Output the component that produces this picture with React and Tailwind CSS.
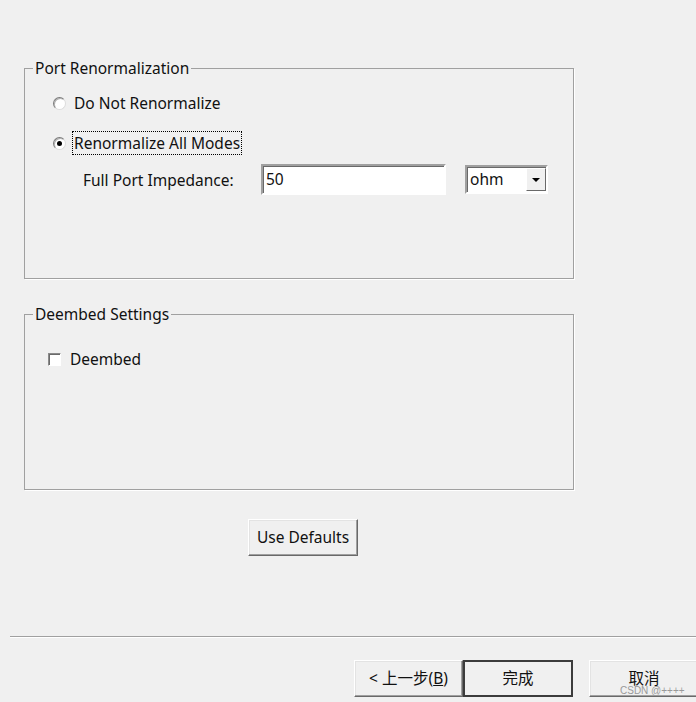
import React from "react";

const font = "font-['Noto_Sans','Noto_Sans_CJK_SC',sans-serif]";

function Radio({ checked }) {
  return (
    <span className="relative flex h-[13px] w-[13px] shrink-0 items-center justify-center rounded-full border border-t-[#7a7a7a] border-l-[#7a7a7a] border-r-[#dcdcdc] border-b-[#dcdcdc] bg-white shadow-[inset_1px_1px_0_#b0b0b0]">
      {checked && <span className="h-[5px] w-[5px] rounded-full bg-black" />}
    </span>
  );
}

function Group({ title, className, children }) {
  return (
    <fieldset
      className={`ml-[24px] w-[550px] border border-[#a0a0a0] shadow-[1px_1px_0_#ffffff] ${className}`}
    >
      <legend className="ml-[8px] px-[2px] text-[15.5px] leading-[20px] text-[#111]">
        {title}
      </legend>
      {children}
    </fieldset>
  );
}

function WinButton({ children, isDefault, className = "" }) {
  return (
    <button
      className={`flex h-[37px] shrink-0 items-center justify-center bg-[#f0f0f0] text-[15.5px] text-[#111] ${
        isDefault
          ? "border-2 border-[#3c3c3c]"
          : "border border-t-white border-l-white border-r-[#696969] border-b-[#696969] shadow-[inset_-1px_-1px_0_#a0a0a0,inset_1px_1px_0_#e3e3e3]"
      } ${className}`}
    >
      {children}
    </button>
  );
}

export default function App() {
  return (
    <div className={`relative h-[702px] w-[696px] overflow-hidden bg-[#f0f0f0] ${font}`}>
      <div className="flex flex-col pt-[58px]">
        {/* Port Renormalization */}
        <Group title="Port Renormalization" className="h-[221px]">
          <div className="flex flex-col pl-[28px] pt-[15px] text-[15.5px] text-[#111]">
            <div className="flex h-[20px] items-center">
              <Radio />
              <span className="ml-[8px] leading-[20px]">Do Not Renormalize</span>
            </div>
            <div className="mt-[18px] flex h-[24px] items-center">
              <Radio checked />
              <span className="ml-[6px] border border-dotted border-black px-[1px] leading-[22px]">
                Renormalize All Modes
              </span>
            </div>
            <div className="mt-[9px] flex h-[31px] items-center">
              <span className="ml-[30px] w-[178px] leading-[20px]">Full Port Impedance:</span>
              <div className="flex h-[31px] w-[185px] items-center border-2 border-t-[#a0a0a0] border-l-[#a0a0a0] border-r-white border-b-white bg-white pl-[3px] shadow-[inset_1px_1px_0_#696969]">
                50
              </div>
              <div className="ml-[19px] flex h-[29px] w-[83px] items-center border-2 border-t-[#a0a0a0] border-l-[#a0a0a0] border-r-white border-b-white bg-white shadow-[inset_1px_1px_0_#696969]">
                <span className="flex-1 pl-[3px]">ohm</span>
                <span className="flex h-[23px] w-[20px] items-center justify-center border border-t-white border-l-white border-r-[#696969] border-b-[#696969] bg-[#f0f0f0]">
                  <svg width="8" height="4" viewBox="0 0 8 4">
                    <path d="M0 0H8L4 4Z" fill="#000" />
                  </svg>
                </span>
              </div>
            </div>
          </div>
        </Group>

        {/* Deembed Settings */}
        <Group title="Deembed Settings" className="mt-[25px] h-[186px]">
          <div className="flex pl-[23px] pt-[25px] text-[15.5px] text-[#111]">
            <div className="flex h-[20px] items-center">
              <span className="h-[13px] w-[13px] border border-t-[#8a8a8a] border-l-[#8a8a8a] border-r-white border-b-white bg-white shadow-[inset_1px_1px_0_#6a6a6a]" />
              <span className="ml-[9px] leading-[20px]">Deembed</span>
            </div>
          </div>
        </Group>

        <WinButton className="ml-[248px] mt-[29px] w-[110px]">Use Defaults</WinButton>

        {/* separator */}
        <div className="ml-[10px] mt-[80px] h-[2px] border-t border-b border-t-[#a0a0a0] border-b-white" />

        {/* wizard buttons */}
        <div className="ml-[354px] mt-[22px] flex">
          <WinButton className="w-[109px]">
            &lt; 上一步(<span className="underline">B</span>)
          </WinButton>
          <WinButton isDefault className="w-[110px]">完成</WinButton>
          <WinButton className="ml-[16px] w-[110px]">取消</WinButton>
        </div>
      </div>

      <span className="absolute left-[620px] top-[685px] font-['Liberation_Sans',sans-serif] text-[10px] leading-[12px] text-[#9a9a9a]">
        CSDN @++++
      </span>
    </div>
  );
}
